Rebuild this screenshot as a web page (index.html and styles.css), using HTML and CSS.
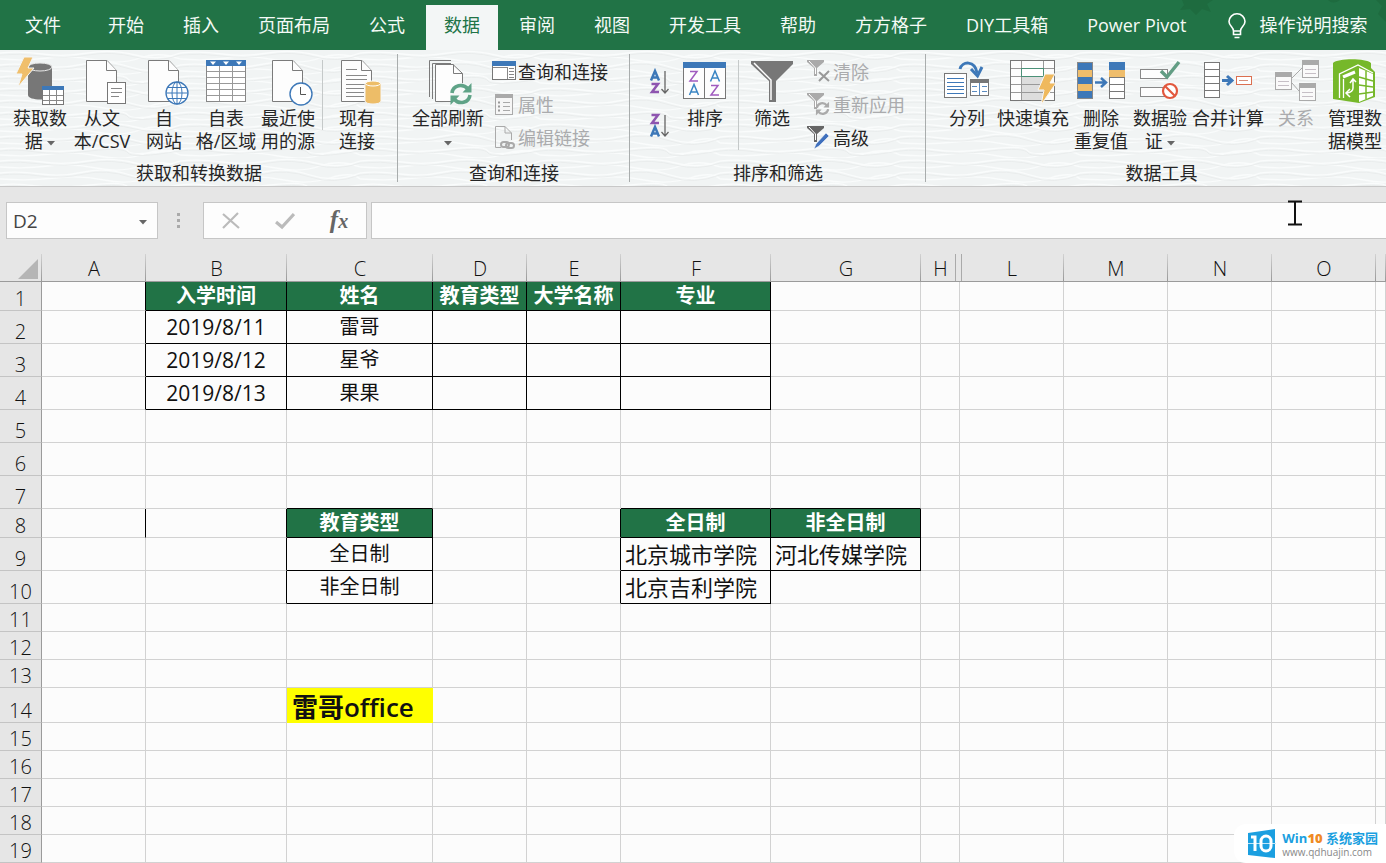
FILE: index.html
```html
<!DOCTYPE html>
<html lang="zh-CN">
<head>
<meta charset="utf-8">
<title>Excel - 数据</title>
<link rel="stylesheet" href="styles.css">
</head>
<body>
<svg class="defs" aria-hidden="true">
  <defs>
    <symbol id="page" viewBox="0 0 50 50" overflow="visible"><path d="M9.500 4.500H30L39.500 14.500V45.500H9.500Z" fill="#fdfdfd" stroke="#7b7b7b"/><path d="M29.500 4.500V14.500H39.500" fill="#fdfdfd" stroke="#7b7b7b"/></symbol>
    <symbol id="sync" viewBox="0 0 24 24"><g fill="none" stroke="currentColor" stroke-width="3.600"><path d="M3 11C4 3 14 1 19 7"/><path d="M21 13C20 21 10 23 5 17"/></g><path d="M22.500 1V10.500H13.500ZM1.500 23V13.500H10.500Z" fill="currentColor"/></symbol>
    <symbol id="down" viewBox="0 0 8 5"><path d="M0 0H8L4 4.500Z" fill="#666"/></symbol>
    <pattern id="waves" width="180" height="36" patternUnits="userSpaceOnUse">
      <g fill="none" stroke="#fafcfc" stroke-width="1.300">
        <path d="M0 3Q20 1 42 4T88 3T135 5T180 3"/><path d="M0 9Q25 11 48 8T96 10T140 8T180 9"/>
        <path d="M0 15Q18 13 40 16T84 14T130 17T180 15"/><path d="M0 21Q30 23 55 20T104 22T150 20T180 21"/>
        <path d="M0 27Q16 25 36 28T90 27T128 29T180 27"/><path d="M0 33Q28 35 50 32T98 34T144 32T180 33"/>
      </g>
      <g fill="none" stroke="#eaeded"><path d="M0 5Q20 3 42 6T88 5T135 7T180 5"/><path d="M0 17Q18 15 40 18T84 16T130 19T180 17"/><path d="M0 29Q16 27 36 30T90 29T128 31T180 29"/></g>
    </pattern>
  </defs>
</svg>

<header class="tabs">
  <svg class="tabs-art" width="250" height="50" viewBox="0 0 250 50" aria-hidden="true"><g fill="#1e6b3f"><path d="M46 0L48 5L44 10L54 9L60 15L66 9L75 12L71 4L77 0ZM192 0Q197 5 204 0ZM240 0L246 6L242 14L250 22V0Z"/></g></svg>
  <nav class="tab-list">
    <button class="tab file">文件</button>
    <button class="tab">开始</button>
    <button class="tab">插入</button>
    <button class="tab">页面布局</button>
    <button class="tab">公式</button>
    <button class="tab active">数据</button>
    <button class="tab">审阅</button>
    <button class="tab">视图</button>
    <button class="tab">开发工具</button>
    <button class="tab">帮助</button>
    <button class="tab">方方格子</button>
    <button class="tab">DIY工具箱</button>
    <button class="tab">Power Pivot</button>
    <button class="tab tell"><svg width="18" height="26" viewBox="0 0 18 26" fill="none" stroke="#fff" stroke-width="1.600"><path d="M5.500 18C5.500 14 1 13 1 8.500A8 7.700 0 0 1 17 8.500C17 13 12.500 14 12.500 18ZM5.500 18V21.500H12.500V18M6.500 24.500H11.500"/></svg>操作说明搜索</button>
  </nav>
</header>

<section class="ribbon">
  <svg class="texture" aria-hidden="true"><rect width="100%" height="100%" fill="url(#waves)"/></svg>

  <div class="group g-get">
    <div class="tools">
      <button class="big w62"><svg class="ico" viewBox="0 0 50 50"><path d="M13 11V39C13 45 37 45 37 39V11Z" fill="#777"/><ellipse cx="25" cy="11" rx="12" ry="4" fill="#777" stroke="#e8e8e8"/><path d="M9 1H18L13 12H19L3 31L7 18H1Z" fill="#f0bf6c" stroke="#f4f6f6"/><rect x="27.500" y="30.500" width="21" height="18" fill="#fff" stroke="#777"/><path d="M27 30H49V34H27Z" fill="#3d78b8"/><path d="M34.500 34V48M41.500 34V48M28 39.500H48M28 44.500H48" stroke="#888"/></svg><span>获取数<br>据 <svg class="arrow"><use href="#down"/></svg></span></button>
      <button class="big w62"><svg class="ico" viewBox="0 0 50 50"><use href="#page"/><rect x="30.500" y="26.500" width="18" height="21" fill="#fff" stroke="#777" /><path d="M34 32.500H45M34 36.500H45M34 40.500H42" stroke="#888"/></svg><span>从文<br>本/CSV</span></button>
      <button class="big w62"><svg class="ico" viewBox="0 0 50 50"><use href="#page"/><circle cx="38" cy="37" r="11" fill="#fff" stroke="#3d78b8" stroke-width="1.300"/><g fill="none" stroke="#3d78b8"><ellipse cx="38" cy="37" rx="5" ry="11"/><path d="M38 26V48M27 37H49M29 31.500H47M29 42.500H47"/></g></svg><span>自<br>网站</span></button>
      <button class="big w62"><svg class="ico" viewBox="0 0 50 50"><rect x="5.500" y="4.500" width="39" height="41" fill="#fff" stroke="#888"/><path d="M5 4H45V10H5Z" fill="#3d78b8"/><path d="M9 5.500H15L12 9ZM22 5.500H28L25 9ZM35 5.500H41L38 9Z" fill="#fff"/><path d="M18.500 10V45M31.500 10V45M6 15.500H44M6 21.500H44M6 27.500H44M6 33.500H44M6 39.500H44" stroke="#999"/></svg><span>自表<br>格/区域</span></button>
      <button class="big w62"><svg class="ico" viewBox="0 0 50 50"><use href="#page"/><circle cx="38" cy="38" r="11" fill="#fff" stroke="#3d78b8" stroke-width="1.400"/><path d="M37.500 31V38.500H43" fill="none" stroke="#555"/></svg><span>最近使<br>用的源</span></button>
      <i class="rule"></i>
      <button class="big w62"><svg class="ico" viewBox="0 0 50 50"><use href="#page"/><path d="M14 13.500H25M14 19.500H35M14 23.500H35M14 28.500H35M14 32.500H32M14 36.500H32M14 40.500H32" stroke="#888"/><path d="M33 27V45C33 49 49 49 49 45V27Z" fill="#edbd68" stroke="#f5f5f5"/><ellipse cx="41" cy="27.500" rx="7.500" ry="2.500" fill="#edbd68" stroke="#fff"/></svg><span>现有<br>连接</span></button>
    </div>
    <div class="caption">获取和转换数据</div>
  </div>

  <div class="group g-query">
    <div class="tools">
      <button class="big w72"><svg class="ico" viewBox="0 0 50 50"><path d="M6.500 41V4.500H28M9.500 43V7.500H28" fill="none" stroke="#7b7b7b"/><path d="M12.500 8.500H30L39.500 17.500V45.500H12.500Z" fill="#fdfdfd" stroke="#7b7b7b"/><path d="M30.500 8.500V17.500H39.500" fill="none" stroke="#7b7b7b"/><circle cx="38" cy="38" r="11" fill="#f6f8f8"/><svg x="26" y="26" width="24" height="24" color="#5fa387"><use href="#sync"/></svg></svg><span>全部刷新<br><svg class="arrow"><use href="#down"/></svg></span></button>
      <div class="stack">
        <button class="small"><svg width="24" height="24" viewBox="0 0 24 24"><rect x=".500" y="2.500" width="23" height="18" fill="#fff" stroke="#777"/><path d="M0 2H24V7H0Z" fill="#3d78b8"/><path d="M1 8.500H15M15.500 8V20M17 9.500H22M17 12.500H22M17 15.500H22M17 18.500H22" stroke="#888"/></svg>查询和连接</button>
        <button class="small off" disabled><svg width="24" height="24" viewBox="0 0 24 24"><rect x="3.500" y="2.500" width="17" height="20" fill="#f6f6f6" stroke="#aaa"/><path d="M3 2H21V6H3Z" fill="#aaa"/><path d="M11 10.500H18M11 14.500H18M11 18.500H18" stroke="#aaa"/><path d="M6 10.500H8M6 14.500H8M6 18.500H8" stroke="#999" stroke-width="2"/></svg>属性</button>
        <button class="small off" disabled><svg width="24" height="24" viewBox="0 0 24 24"><path d="M9 22.500H3.500V1.500H13L19.500 8V15M13 1.500V8H19.500" fill="none" stroke="#aaa"/><g fill="none" stroke="#aaa" stroke-width="2"><rect x="9" y="17" width="8" height="5" rx="2.500"/><rect x="14" y="18" width="8" height="5" rx="2.500"/></g></svg>编辑链接</button>
      </div>
    </div>
    <div class="caption">查询和连接</div>
  </div>

  <div class="group g-sort">
    <div class="tools">
      <div class="stack sorts">
        <button class="sort" aria-label="升序"><svg width="20" height="28" viewBox="0 0 20 28" fill="none" stroke-width="2.500"><path d="M2 12.500L6 3L10 12.500M3.500 9.500H8.500" stroke="#3d78b8"/><path d="M2.500 16H9L3 24H10" stroke="#8e55b0"/><path d="M16 3V25M12.500 21L16 25L19.500 21" stroke="#666" stroke-width="1.300"/></svg></button>
        <button class="sort" aria-label="降序"><svg width="20" height="28" viewBox="0 0 20 28" fill="none" stroke-width="2.500"><path d="M2.500 3H9L3 11H10" stroke="#8e55b0"/><path d="M2 24.500L6 15L10 24.500M3.500 21.500H8.500" stroke="#3d78b8"/><path d="M16 3V24M12.500 20L16 24L19.500 20" stroke="#666" stroke-width="1.300"/></svg></button>
      </div>
      <button class="big w54"><svg class="ico" viewBox="0 0 50 50"><rect x="3.500" y="6.500" width="42" height="36" fill="#fdfdfd" stroke="#777"/><path d="M3 6H46V12H3Z" fill="#3d78b8"/><path d="M24.500 12V42" stroke="#777"/><g fill="none" stroke-width="1.500"><path d="M10 15.500H17L10 25H18M31 29.500H38L31 39H39" stroke="#a05bbf"/><path d="M9.500 39L14 28.500L18.500 39M11 36H17M30.500 25.500L35 15L39.500 25.500M32 22H38" stroke="#3b86c4"/></g></svg><span>排序</span></button>
      <i class="rule"></i>
      <button class="big w62"><svg class="ico" viewBox="0 0 50 50"><path d="M4 5H46V8L29 25V46H22V25L4 8Z" fill="#777"/><path d="M7 7L24 24V44" fill="none" stroke="#fff" stroke-width="1.500"/></svg><span>筛选</span></button>
      <div class="stack">
        <button class="small off" disabled><svg width="24" height="24" viewBox="0 0 24 24"><path d="M0 1H17V3L10 9V17H7V9L0 3Z" fill="#aaa"/><path d="M2 2L8.500 9V15" fill="none" stroke="#fff"/><path d="M12 13L22 22M22 12L12 22" stroke="#999" stroke-width="2"/></svg>清除</button>
        <button class="small off" disabled><svg width="24" height="24" viewBox="0 0 24 24"><path d="M0 1H17V3L10 9V17H7V9L0 3Z" fill="#aaa"/><path d="M2 2L8.500 9V15" fill="none" stroke="#fff"/><svg x="8" y="9" width="15" height="15" color="#aaa"><use href="#sync"/></svg></svg>重新应用</button>
        <button class="small"><svg width="24" height="24" viewBox="0 0 24 24"><path d="M0 1H17V3L10 9V17H7V9L0 3Z" fill="#666"/><path d="M2 2L8.500 9V15" fill="none" stroke="#fff"/><path d="M7 24L9 19L19 8L22 11L12 21Z" fill="#3f70bd" stroke="#fff" stroke-width=".500"/></svg>高级</button>
      </div>
    </div>
    <div class="caption">排序和筛选</div>
  </div>

  <div class="group g-data">
    <div class="tools">
      <button class="big w50"><svg class="ico" viewBox="0 0 50 50"><rect x="2.500" y="17.500" width="22" height="24" fill="#fff" stroke="#777"/><path d="M5 22.500H22M5 26.500H22M5 30.500H22M5 33.500H22M5 37.500H22" stroke="#3d78b8"/><rect x="28.500" y="23.500" width="18" height="16" fill="#fff" stroke="#777"/><path d="M28 23H47V27H28Z" fill="#777"/><path d="M37.500 27V39M30 30.500H35M40 30.500H45M30 35.500H35M40 35.500H45" stroke="#5a8bc0"/><path d="M18 13C20 5 33 4 35 17" fill="none" stroke="#3d78b8" stroke-width="3"/><path d="M29 13L35.500 20L40 11" fill="none" stroke="#3d78b8" stroke-width="3"/></svg><span>分列</span></button>
      <button class="big w72"><svg class="ico" viewBox="0 0 50 50"><rect x="2.500" y="4.500" width="44" height="40" fill="#fdfdfd" stroke="#777"/><path d="M13 21H36V44H13Z" fill="#ddd"/><path d="M13.500 5V44M35.500 5V44M3 12.500H46M3 20.500H46M3 28.500H46M3 36.500H46" stroke="#999"/><rect x="13.500" y="12.500" width="22" height="8" fill="#fff" stroke="#4b9178"/><path d="M37 18H47L42 27H48L33 49L36 34H30Z" fill="#efb95e" stroke="#f8f8f8"/></svg><span>快速填充</span></button>
      <button class="big w54"><svg class="ico" viewBox="0 0 50 50"><path d="M1 6H17V43H1Z" fill="#3d78b8"/><path d="M1 14H17V21H1ZM1 28H17V35H1Z" fill="#efbd6b"/><rect x="1.500" y="6.500" width="15" height="36" fill="none" stroke="#888"/><rect x="33.500" y="6.500" width="15" height="36" fill="#fff" stroke="#777"/><path d="M33 6H49V14H33Z" fill="#3d78b8"/><path d="M33 14H49V21H33Z" fill="#efbd6b"/><path d="M33 21.500H49M33 28.500H49M33 35.500H49" stroke="#777"/><path d="M19 26.500H29M25 22L30 26.500L25 31" fill="none" stroke="#3d78b8" stroke-width="2.500"/></svg><span>删除<br>重复值</span></button>
      <button class="big w54"><svg class="ico" viewBox="0 0 50 50"><rect x="5.500" y="13.500" width="27" height="9" fill="#fdfdfd" stroke="#888"/><rect x="5.500" y="31.500" width="27" height="9" fill="#fdfdfd" stroke="#888"/><path d="M26 15L32 21L44 6" fill="none" stroke="#629d84" stroke-width="3.500"/><circle cx="35" cy="35" r="7" fill="#fff" stroke="#e2583e" stroke-width="2.200"/><path d="M30 30L40 40" stroke="#e2583e" stroke-width="2.200"/></svg><span>数据验<br>证 <svg class="arrow"><use href="#down"/></svg></span></button>
      <button class="big w72"><svg class="ico" viewBox="0 0 50 50"><rect x="1.500" y="6.500" width="15" height="35" fill="#fff" stroke="#777"/><path d="M1 13.500H17M1 20.500H17M1 27.500H17M1 34.500H17" stroke="#777"/><path d="M19 24.500H28M24 20L29 24.500L24 29" fill="none" stroke="#3d78b8" stroke-width="3"/><rect x="33.500" y="20.500" width="15" height="8" fill="#fff" stroke="#db6f50"/><path d="M36 24.500H45" stroke="#d78f7a"/></svg><span>合并计算</span></button>
      <button class="big w54 off" disabled><svg class="ico" viewBox="0 0 50 50"><path d="M21 22L31 12M21 27L28 35" stroke="#aaa"/><g fill="#fafafa" stroke="#aaa"><rect x="4.500" y="16.500" width="16" height="17"/><rect x="31.500" y="4.500" width="16" height="17"/><rect x="28.500" y="27.500" width="16" height="17"/></g><path d="M4 16H21V21H4ZM31 4H48V9H31ZM28 27H45V32H28Z" fill="#aaa"/><path d="M7 25.500H18M7 29.500H18M34 13.500H45M34 17.500H45M31 36.500H42M31 40.500H42" stroke="#c6bfc6"/></svg><span>关系</span></button>
      <button class="big w54"><svg class="ico" viewBox="0 0 50 50"><path d="M3 7C8 2 36 2 41 7V12L45 16V41L29 47L3 43Z" fill="#76b82a"/><path d="M9.500 42V18L28 9L43 17" fill="none" stroke="#fff" stroke-width="1.300"/><path d="M29 12L43 18V40L29 46Z" fill="#fff"/><path d="M36 15V43M29 21L43 25M29 29L43 31M29 38L43 36" stroke="#76b82a" stroke-width="1.500"/><path d="M13 21L25 16" stroke="#fff" stroke-width="3"/><path d="M13.500 23V42" stroke="#fff" stroke-width="1.300"/><path d="M23 24V32Q23 36 17 37M20 27L23 23L26 26M20 33L16 37L20 41" fill="none" stroke="#fff" stroke-width="1.500"/></svg><span>管理数<br>据模型</span></button>
    </div>
    <div class="caption">数据工具</div>
  </div>
</section>

<section class="formula-bar">
  <div class="name-box"><input type="text" value="D2" aria-label="名称框"><button aria-label="名称列表"><svg class="arrow"><use href="#down"/></svg></button></div>
  <svg class="dots" width="4" height="16" viewBox="0 0 4 16" fill="#aaa"><path d="M0 0H3V3H0ZM0 6H3V9H0ZM0 12H3V15H0Z"/></svg>
  <div class="fx">
    <button aria-label="取消"><svg width="20" height="18" viewBox="0 0 20 18"><path d="M2 2L18 16M17 1L2 16" stroke="#bbb" stroke-width="2.200"/></svg></button>
    <button aria-label="输入"><svg width="20" height="18" viewBox="0 0 20 18"><path d="M1 10L7 15L19 2" fill="none" stroke="#bbb" stroke-width="3.200"/></svg></button>
    <button class="fn" aria-label="插入函数">f<small>x</small></button>
  </div>
  <input class="formula" type="text" aria-label="编辑栏">
  <svg class="ibeam" width="14" height="26" viewBox="0 0 14 26" aria-hidden="true"><path d="M0 1.500H14M0 24.500H14M7 1V25" stroke="#111" stroke-width="2"/></svg>
</section>

<main class="sheet">
<table>
  <colgroup><col class="c-num"><col class="c-std"><col class="c-b"><col class="c-c"><col class="c-d"><col class="c-d"><col class="c-f"><col class="c-f"><col class="c-h"><col class="c-std"><col class="c-std"><col class="c-std"><col class="c-std"><col></colgroup>
  <thead><tr><th class="corner"><svg width="20" height="20" viewBox="0 0 20 20"><path d="M20 0V20H0Z" fill="#b5b5b5"/></svg></th><th>A</th><th>B</th><th>C</th><th>D</th><th>E</th><th>F</th><th>G</th><th class="skip">H</th><th>L</th><th>M</th><th>N</th><th>O</th><th></th></tr></thead>
  <tbody>
  <tr class="h29"><th>1</th><td class="kr"></td><td class="k head">入学时间</td><td class="k head">姓名</td><td class="k head">教育类型</td><td class="k head">大学名称</td><td class="k head">专业</td><td></td><td></td><td></td><td></td><td></td><td></td><td></td></tr>
  <tr class="h33"><th>2</th><td class="kr"></td><td class="k date">2019/8/11</td><td class="k">雷哥</td><td class="k"></td><td class="k"></td><td class="k"></td><td></td><td></td><td></td><td></td><td></td><td></td><td></td></tr>
  <tr class="h33"><th>3</th><td class="kr"></td><td class="k date">2019/8/12</td><td class="k">星爷</td><td class="k"></td><td class="k"></td><td class="k"></td><td></td><td></td><td></td><td></td><td></td><td></td><td></td></tr>
  <tr class="h33"><th>4</th><td class="kr"></td><td class="k date">2019/8/13</td><td class="k">果果</td><td class="k"></td><td class="k"></td><td class="k"></td><td></td><td></td><td></td><td></td><td></td><td></td><td></td></tr>
  <tr class="h33"><th>5</th><td></td><td></td><td></td><td></td><td></td><td></td><td></td><td></td><td></td><td></td><td></td><td></td><td></td></tr>
  <tr class="h33"><th>6</th><td></td><td></td><td></td><td></td><td></td><td></td><td></td><td></td><td></td><td></td><td></td><td></td><td></td></tr>
  <tr class="h33"><th>7</th><td></td><td></td><td class="kb"></td><td></td><td></td><td class="kb"></td><td class="kb"></td><td></td><td></td><td></td><td></td><td></td><td></td></tr>
  <tr class="h29"><th>8</th><td class="kr"></td><td class="kr"></td><td class="k head">教育类型</td><td></td><td class="kr"></td><td class="k head">全日制</td><td class="k head">非全日制</td><td></td><td></td><td></td><td></td><td></td><td></td></tr>
  <tr class="h33"><th>9</th><td></td><td class="kr"></td><td class="k">全日制</td><td></td><td class="kr"></td><td class="k school">北京城市学院</td><td class="k school">河北传媒学院</td><td></td><td></td><td></td><td></td><td></td><td></td></tr>
  <tr class="h33"><th>10</th><td></td><td class="kr"></td><td class="k">非全日制</td><td></td><td class="kr"></td><td class="k school">北京吉利学院</td><td></td><td></td><td></td><td></td><td></td><td></td><td></td></tr>
  <tr class="h28"><th>11</th><td></td><td></td><td></td><td></td><td></td><td></td><td></td><td></td><td></td><td></td><td></td><td></td><td></td></tr>
  <tr class="h28"><th>12</th><td></td><td></td><td></td><td></td><td></td><td></td><td></td><td></td><td></td><td></td><td></td><td></td><td></td></tr>
  <tr class="h28"><th>13</th><td></td><td></td><td></td><td></td><td></td><td></td><td></td><td></td><td></td><td></td><td></td><td></td><td></td></tr>
  <tr class="h35"><th>14</th><td></td><td></td><td class="brand">雷哥office</td><td></td><td></td><td></td><td></td><td></td><td></td><td></td><td></td><td></td><td></td></tr>
  <tr class="h28"><th>15</th><td></td><td></td><td></td><td></td><td></td><td></td><td></td><td></td><td></td><td></td><td></td><td></td><td></td></tr>
  <tr class="h28"><th>16</th><td></td><td></td><td></td><td></td><td></td><td></td><td></td><td></td><td></td><td></td><td></td><td></td><td></td></tr>
  <tr class="h28"><th>17</th><td></td><td></td><td></td><td></td><td></td><td></td><td></td><td></td><td></td><td></td><td></td><td></td><td></td></tr>
  <tr class="h28"><th>18</th><td></td><td></td><td></td><td></td><td></td><td></td><td></td><td></td><td></td><td></td><td></td><td></td><td></td></tr>
  <tr class="h28"><th>19</th><td></td><td></td><td></td><td></td><td></td><td></td><td></td><td></td><td></td><td></td><td></td><td></td><td></td></tr>
  </tbody>
</table>
</main>

<aside class="mark">
  <svg width="28" height="30" viewBox="0 0 28 30"><path d="M0 4L27 0V29L0 26Z" fill="#1b9fe0"/><path d="M0 14.500H28" stroke="#bfe6fa"/><path d="M3 8H7V22" fill="none" stroke="#fff" stroke-width="3"/><rect x="13" y="7" width="10" height="15" rx="5" fill="none" stroke="#fff" stroke-width="3"/></svg>
  <div><div class="mark-name">Win<b>10</b> 系统家园</div><div class="mark-url">www.qdhuajin.com</div></div>
</aside>
</body>
</html>
```
FILE: styles.css
```css
* { box-sizing: border-box; }
body {
  margin: 0;
  height: 100vh;
  position: relative;
  overflow: hidden;
  background: #e6e6e6;
  color: #262626;
  font-family: "Open Sans", "Noto Sans CJK SC", sans-serif;
  font-size: 18px;
}
button, input { font: inherit; color: inherit; border: 0; padding: 0; background: none; }
svg { flex: none; }
.defs { position: absolute; width: 0; height: 0; }

.tabs { position: relative; height: 50px; padding-top: 5px; background: #217346; }
.tabs-art { position: absolute; top: 0; right: 0; }
.tab-list { position: relative; display: flex; gap: 3px; height: 45px; }
.tab { flex: none; padding: 0 18px 4px; color: #f4faf6; white-space: nowrap; line-height: 41px; }
.tab.file { padding: 0 26px 4px 25px; }
.tab.active { background: #f3f6f6; color: #217346; }
.tab.tell { display: flex; align-items: center; gap: 14px; padding-left: 20px; }

.ribbon {
  position: relative;
  display: flex;
  height: 137px;
  overflow: hidden;
  background: #f1f4f4;
  border-bottom: 1px solid #c8c8c8;
}
.texture { position: absolute; inset: 0; width: 100%; height: 100%; }
.group { position: relative; flex: none; display: flex; flex-direction: column; padding-top: 6px; }
.group:not(.g-data)::after { content: ""; position: absolute; right: 0; top: 4px; bottom: 4px; width: 1px; background: #a9adad; }
.g-get { width: 398px; }
.g-query { width: 232px; }
.g-sort { width: 296px; }
.g-data { width: 471px; }
.tools { display: flex; height: 105px; align-items: flex-start; }
.g-get .tools { padding-left: 9px; }
.g-query .tools { padding-left: 14px; gap: 8px; }
.g-sort .tools { padding-left: 19px; }
.g-data .tools { padding-left: 16px; gap: 5px; }
.caption { text-align: center; line-height: 25px; }
.big { flex: none; white-space: nowrap; text-align: center; line-height: 23px; }
.ico { display: block; width: 50px; height: 50px; margin: 0 auto 1px; overflow: visible; }
.arrow { width: 8px; height: 5px; vertical-align: middle; }
.w50 { width: 50px; }
.w54 { width: 54px; }
.w62 { width: 62px; }
.w72 { width: 72px; }
.rule { flex: none; width: 1px; height: 70px; margin: 4px 3px; background: #c5c9c9; }
.g-sort .rule { height: 90px; margin: 4px 2px 0 6px; }
.stack { display: flex; flex-direction: column; }
.small { display: flex; align-items: center; gap: 2px; height: 33px; padding-bottom: 4px; white-space: nowrap; }
.g-sort .small { margin-left: 4px; }
.off { color: #aaabad; }
.sorts { gap: 16px; padding: 12px 9px 0 0; }
.sort { display: flex; height: 28px; }

.formula-bar { position: relative; display: flex; align-items: center; height: 67px; padding-left: 6px; }
.name-box, .fx, .formula { height: 37px; background: #fdfdfd; border: 1px solid #c6c6c6; }
.name-box { display: flex; width: 152px; color: #444; font-size: 19px; }
.name-box input { flex: 1; min-width: 0; padding-left: 6px; }
.name-box button { width: 28px; line-height: 30px; }
.dots { margin: 0 22px 0 19px; }
.fx { display: flex; width: 164px; justify-content: space-around; align-items: center; }
.fx button { width: 54px; display: flex; justify-content: center; }
.fx .fn { align-items: baseline; color: #666; font: italic bold 25px/30px "Liberation Serif", serif; }
.fn small { font-size: 20px; }
.formula { flex: 1; min-width: 0; margin-left: 4px; padding: 0 8px; border-right: 0; }
.ibeam { position: absolute; right: 84px; top: 13px; }

table { width: 100%; table-layout: fixed; border-collapse: separate; border-spacing: 0; background: #fcfcfc; }
.c-num { width: 42px; }
.c-std { width: 104px; }
.c-b { width: 141px; }
.c-c { width: 146px; }
.c-d { width: 94px; }
.c-f { width: 150px; }
.c-h { width: 39px; }
th, td { padding: 0; overflow: hidden; white-space: nowrap; line-height: 24px; font-size: 20px; color: #111; }
thead th {
  position: relative;
  height: 28px;
  padding-top: 3px;
  font-weight: 300;
  overflow: visible;
  background: linear-gradient(#d2d2d2, #999) right / 1px 100% no-repeat #e6e6e6;
  border-bottom: 1px solid #9b9b9b;
}
thead .corner { text-align: right; padding-right: 4px; line-height: 20px; }
.corner svg { display: block; margin-left: auto; }
.skip::after { content: ""; position: absolute; z-index: 1; right: -2px; top: 0; bottom: 0; width: 5px; background: #e6e6e6; border: solid #aaa; border-width: 0 1px; }
tbody th { font-weight: 300; vertical-align: bottom; background: #e6e6e6; border-right: 1px solid #9b9b9b; border-bottom: 1px solid #c4c4c4; line-height: 22px; }
td { text-align: center; border-right: 1px solid #d2d2d2; border-bottom: 1px solid #d2d2d2; }
td.k, td.kr { border-right-color: #000; }
td.k, td.kb { border-bottom-color: #000; }
td.head { background: #217346; color: #fff; font-weight: 700; }
td.date { font-size: 21px; }
td.school { text-align: left; padding-left: 4px; font-size: 22px; }
td.brand { text-align: left; padding: 3px 0 0 5px; background: #ff0; border-color: #ff0; font-size: 26px; font-weight: 600; line-height: 30px; }
.h28 { height: 28px; }
.h29 { height: 29px; }
.h33 { height: 33px; }
.h35 { height: 35px; }

.mark {
  position: absolute;
  right: 0;
  bottom: 0;
  display: flex;
  align-items: center;
  gap: 6px;
  height: 39px;
  padding: 0 8px 0 14px;
  background: #fff;
  border-radius: 12px 0 0 12px;
}
.mark-name { color: #1b9fe0; font-size: 13px; font-weight: 700; line-height: 16px; white-space: nowrap; }
.mark-name b { color: #f08a24; }
.mark-url { color: #888; font-size: 10px; line-height: 12px; }
```
